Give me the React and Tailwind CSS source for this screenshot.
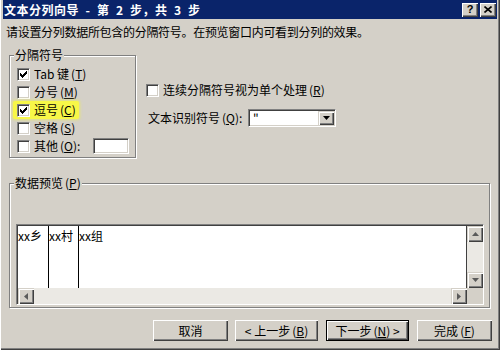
import React from 'react';

const bevel = 'shadow-[inset_1px_1px_0_#d4d0c8,inset_2px_2px_0_#fff,inset_-1px_-1px_0_#404040,inset_-2px_-2px_0_#808080]';

function Key({ k }) {
  return (
    <span className="ml-[2px]">
      (<span className="underline underline-offset-[1px]">{k}</span>)
    </span>
  );
}

function Check({ checked }) {
  return (
    <span className="w-[13px] h-[13px] shrink-0 bg-white border border-t-[#808080] border-l-[#808080] border-b-white border-r-white shadow-[inset_1px_1px_0_#404040,inset_-1px_-1px_0_#d4d0c8] flex items-center justify-center">
      {checked && (
        <svg width="7" height="7" viewBox="0 0 7 7" shapeRendering="crispEdges">
          <path d="M0 2h1v1h1v1h1v-1h1v-1h1v-1h1v-1h1v3h-1v1h-1v1h-1v1h-1v1h-1v-1h-1v-1h-1z" fill="#000" />
        </svg>
      )}
    </span>
  );
}

function Arrow({ dir }) {
  const pts = {
    up: '0,4 3.5,0 7,4',
    down: '0,0 7,0 3.5,4',
    left: '4,0 4,7 0,3.5',
    right: '0,0 0,7 4,3.5',
  }[dir];
  const vertical = dir === 'up' || dir === 'down';
  return (
    <div className={`w-[16px] h-[16px] shrink-0 bg-[#d4d0c8] flex items-center justify-center ${bevel}`}>
      <svg width={vertical ? 7 : 4} height={vertical ? 4 : 7} viewBox={vertical ? '0 0 7 4' : '0 0 4 7'}>
        <polygon points={pts} fill="#5a5a5a" />
      </svg>
    </div>
  );
}

function Group({ label, className, children }) {
  return (
    <div className={`relative border border-[#808080] shadow-[inset_1px_1px_0_#fff,1px_1px_0_#fff] ${className}`}>
      <span className="absolute left-[4px] -top-[7px] px-[1px] bg-[#d4d0c8] text-[12px] leading-[12px]">{label}</span>
      {children}
    </div>
  );
}

function Button({ children, w, focused }) {
  return (
    <div
      className={`h-[21px] flex items-center justify-center text-[12px] leading-[12px] bg-[#d4d0c8] ${w} ${
        focused
          ? 'border border-black shadow-[inset_1px_1px_0_#fff,inset_-1px_-1px_0_#404040,inset_-2px_-2px_0_#808080]'
          : 'shadow-[inset_1px_1px_0_#fff,inset_-1px_-1px_0_#404040,inset_-2px_-2px_0_#808080]'
      }`}
    >
      {children}
    </div>
  );
}

export default function App() {
  return (
    <div className="w-[500px] h-[350px] overflow-hidden bg-[#d4d0c8] flex flex-col px-[3px] text-black font-['Noto_Sans_CJK_SC',sans-serif] shadow-[inset_1px_0_0_#fff,inset_-1px_-1px_0_#404040,inset_-2px_-2px_0_#808080]">
      {/* title bar */}
      <div className="h-[19px] shrink-0 bg-[#0a246a] flex items-center justify-between pl-[1px] pr-[1px]">
        <span className="text-white font-bold text-[12px] leading-[12px] tracking-[0.5px] whitespace-pre">
          {'文本分列向导\u2002-\u2002第\u20022\u2002步，共\u20023\u2002步'}
        </span>
        <div className="flex gap-[2px]">
          <div className="w-[16px] h-[14px] bg-[#d4d0c8] flex items-center justify-center shadow-[inset_1px_1px_0_#fff,inset_-1px_-1px_0_#404040,inset_-2px_-2px_0_#808080]">
            <span className="font-['Liberation_Sans',sans-serif] font-bold text-[11px] leading-[11px]">?</span>
          </div>
          <div className="w-[16px] h-[14px] bg-[#d4d0c8] flex items-center justify-center shadow-[inset_1px_1px_0_#fff,inset_-1px_-1px_0_#404040,inset_-2px_-2px_0_#808080]">
            <svg width="8" height="7" viewBox="0 0 8 7">
              <path d="M0.5 0.5L7.5 6.5M7.5 0.5L0.5 6.5" stroke="#000" strokeWidth="1.6" />
            </svg>
          </div>
        </div>
      </div>

      <div className="mt-[6px] pl-[3px] h-[14px] leading-[14px] text-[12px] tracking-[-0.3px] whitespace-nowrap">
        请设置分列数据所包含的分隔符号。在预览窗口内可看到分列的效果。
      </div>

      <div className="mt-[16px] flex">
        <Group label="分隔符号" className="ml-[6px] w-[127px] h-[103px] pt-[9px] pl-[7px] flex flex-col">
          <div className="h-[18px] flex items-center gap-[4px] text-[12px] leading-[12px]">
            <Check checked />
            <span>Tab 键<Key k="T" /></span>
          </div>
          <div className="h-[18px] flex items-center gap-[4px] text-[12px] leading-[12px]">
            <Check />
            <span>分号<Key k="M" /></span>
          </div>
          <div className="h-[18px] w-fit -ml-[4px] pl-[4px] pr-[3px] flex items-center gap-[4px] text-[12px] leading-[12px] bg-[#f7f748] rounded-[2px] shadow-[0_0_3px_1px_#e4e47a]">
            <Check checked />
            <span>逗号<Key k="C" /></span>
          </div>
          <div className="h-[18px] flex items-center gap-[4px] text-[12px] leading-[12px]">
            <Check />
            <span>空格<Key k="S" /></span>
          </div>
          <div className="h-[18px] flex items-center gap-[4px] text-[12px] leading-[12px]">
            <Check />
            <span className="w-[55px]">其他<Key k="O" />:</span>
            <span className="w-[36px] h-[16px] bg-white border border-t-[#808080] border-l-[#808080] border-b-white border-r-white shadow-[inset_1px_1px_0_#404040,inset_-1px_-1px_0_#d4d0c8]" />
          </div>
        </Group>

        <div className="ml-[10px] flex flex-col">
          <div className="mt-[26px] h-[18px] flex items-center gap-[4px] text-[12px] leading-[12px]">
            <Check />
            <span>连续分隔符号视为单个处理<Key k="R" /></span>
          </div>
          <div className="mt-[9px] h-[19px] flex items-center text-[12px] leading-[12px]">
            <span className="w-[102px] pl-[2px]">文本识别符号<Key k="Q" />:</span>
            <div className="w-[88px] h-[18px] bg-white flex items-center border border-t-[#808080] border-l-[#808080] border-b-white border-r-white shadow-[inset_1px_1px_0_#404040,inset_-1px_-1px_0_#d4d0c8] p-[1px]">
              <span className="flex-1 pl-[3px] self-start pt-[1px] text-[12px] leading-[12px]">"</span>
              <div className={`w-[16px] h-[14px] bg-[#d4d0c8] flex items-center justify-center ${bevel}`}>
                <svg width="7" height="4" viewBox="0 0 7 4">
                  <polygon points="0,0 7,0 3.5,4" fill="#000" />
                </svg>
              </div>
            </div>
          </div>
        </div>
      </div>

      <Group label={<span>数据预览<Key k="P" /></span>} className="mt-[25px] ml-[6px] w-[481px] h-[125px]">
        <div className="mt-[40px] ml-[6px] w-[468px] h-[81px] flex flex-col border border-t-[#808080] border-l-[#808080] border-b-white border-r-white shadow-[inset_1px_1px_0_#404040]">
          <div className="flex-1 flex pt-[1px] pl-[1px]">
            <div className="flex-1 bg-white flex border-r border-[#404040] text-[12px] leading-[12px]">
              <div className="w-[31px] border-r border-black pt-[4px]">xx乡</div>
              <div className="w-[30px] border-r border-black pt-[4px]">xx村</div>
              <div className="pt-[4px]">xx组</div>
            </div>
            <div className="w-[16px] flex flex-col">
              <Arrow dir="up" />
              <div className="flex-1 bg-[#ebe9e4]" />
              <Arrow dir="down" />
            </div>
          </div>
          <div className="h-[16px] flex pl-[1px]">
            <Arrow dir="left" />
            <div className="flex-1 bg-[#ebe9e4]" />
            <Arrow dir="right" />
            <div className="w-[16px] bg-[#d4d0c8]" />
          </div>
        </div>
      </Group>

      <div className="mt-[12px] flex justify-end pr-[5px]">
        <Button w="w-[75px]">取消</Button>
        <div className="ml-[7px]">
          <Button w="w-[83px]">
            <span>&lt; 上一步<Key k="B" /></span>
          </Button>
        </div>
        <div className="ml-[8px]">
          <Button w="w-[83px]" focused>
            <span>下一步<Key k="N" /> &gt;</span>
          </Button>
        </div>
        <div className="ml-[8px]">
          <Button w="w-[75px]">
            <span>完成<Key k="F" /></span>
          </Button>
        </div>
      </div>
    </div>
  );
}
